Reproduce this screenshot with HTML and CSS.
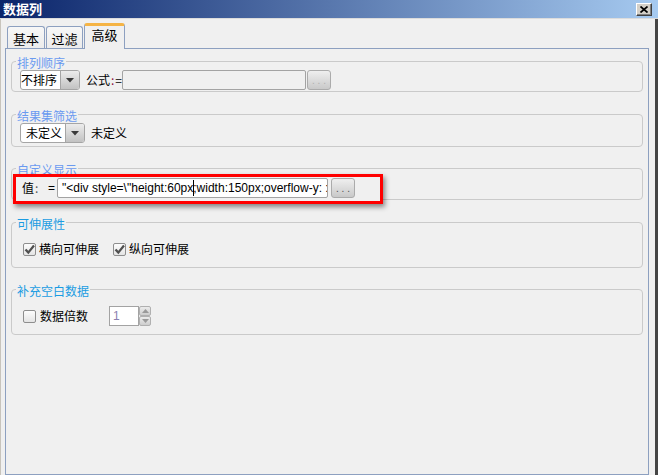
FILE: index.html
```html
<!DOCTYPE html>
<html lang="zh">
<head>
<meta charset="utf-8">
<title>数据列</title>
<link rel="stylesheet" href="styles.css">
</head>
<body>
<div class="window">
  <div class="titlebar">
    <span class="title">数据列</span>
    <span class="close"><svg width="8" height="7" viewBox="0 0 8 7"><path d="M0.5 0.5 L7.5 6.5 M7.5 0.5 L0.5 6.5" stroke="#000" stroke-width="1.7" fill="none"/></svg></span>
  </div>
  <div class="main">
    <div class="tabs">
      <div class="tab t1">基本</div>
      <div class="tab t2">过滤</div>
      <div class="tab active">高级</div>
    </div>
    <div class="panel">
      <div class="group g1">
        <div class="legend">排列顺序</div>
        <div class="row">
          <div class="select s1"><span class="val">不排序</span><span class="btn"><svg width="8" height="5" viewBox="0 0 8 5"><polygon points="0,0 8,0 4,4.5" fill="#3a3a3a"/></svg></span></div>
          <span class="formula">公式<span class="colon">:</span>=</span>
          <div class="field disabled f1"></div>
          <div class="dots off">. . .</div>
        </div>
      </div>

      <div class="group g2">
        <div class="legend">结果集筛选</div>
        <div class="row">
          <div class="select s2"><span class="val">未定义</span><span class="btn"><svg width="8" height="5" viewBox="0 0 8 5"><polygon points="0,0 8,0 4,4.5" fill="#3a3a3a"/></svg></span></div>
          <span class="plain">未定义</span>
        </div>
      </div>

      <div class="group g3">
        <div class="legend">自定义显示</div>
        <div class="redbox">
          <span class="v-label">值<span class="vcolon">:</span></span>
          <span class="eq">=</span>
          <div class="field text"><span>"&lt;div style=\"height:60px</span><span class="caret"></span><span>;width:150px;overflow-y: :</span></div>
          <div class="dots on">. . .</div>
        </div>
      </div>

      <div class="group g4">
        <div class="legend strong">可伸展性</div>
        <div class="row checks">
          <span class="cb"><svg width="11" height="11" viewBox="0 0 11 11"><path d="M1.5 5.5 L4.3 8.6 L10 1.5" stroke="#4f4f4f" stroke-width="2.3" fill="none"/></svg></span>
          <span class="cb-label">横向可伸展</span>
          <span class="cb second"><svg width="11" height="11" viewBox="0 0 11 11"><path d="M1.5 5.5 L4.3 8.6 L10 1.5" stroke="#4f4f4f" stroke-width="2.3" fill="none"/></svg></span>
          <span class="cb-label">纵向可伸展</span>
        </div>
      </div>

      <div class="group g5">
        <div class="legend strong">补充空白数据</div>
        <div class="row checks tall">
          <span class="cb"></span>
          <span class="cb-label wide">数据倍数</span>
          <div class="spinner">
            <span class="spin-field">1</span>
            <span class="spin-btns">
              <span class="spin-b"><svg width="7" height="4" viewBox="0 0 7 4"><polygon points="0,4 7,4 3.5,0" fill="#9a9a9a"/></svg></span>
              <span class="spin-b"><svg width="7" height="4" viewBox="0 0 7 4"><polygon points="0,0 7,0 3.5,4" fill="#9a9a9a"/></svg></span>
            </span>
          </div>
        </div>
      </div>
    </div>
  </div>
</div>
</body>
</html>
```
FILE: styles.css
```css
* { box-sizing: border-box; }
html, body { margin: 0; padding: 0; }
body {
  width: 658px;
  height: 475px;
  overflow: hidden;
  background: #f0f0f0;
  font-family: "Liberation Sans", "Noto Sans CJK SC", sans-serif;
  font-size: 12px;
  color: #000;
}
.window {
  width: 658px;
  height: 475px;
  display: flex;
  flex-direction: column;
}
.titlebar {
  flex: none;
  height: 19px;
  border-bottom: 1px solid #dcdcdc;
  background: linear-gradient(to right, #0a246a, #a6caf0);
  display: flex;
  align-items: center;
  justify-content: space-between;
  padding: 0 6px 0 3px;
}
.title {
  color: #fff;
  font-family: "Noto Sans CJK SC", sans-serif;
  font-weight: bold;
  font-size: 13px;
  line-height: 16px;
}
.close {
  width: 16px;
  height: 13px;
  margin-top: 1px;
  background: #d4d0c8;
  border: 1px solid;
  border-color: #fff #404040 #404040 #fff;
  box-shadow: inset -1px -1px #808080;
  display: flex;
  align-items: center;
  justify-content: center;
}
.main {
  flex: 1;
  min-height: 0;
  display: flex;
  flex-direction: column;
  border-left: 1px solid #c8c4bc;
  border-right: 3px solid #454545;
  padding: 4px 6px 0 4px;
}
.tabs {
  flex: none;
  height: 25px;
  display: flex;
  align-items: flex-end;
  gap: 1px;
  margin-left: 2px;
  position: relative;
  z-index: 1;
}
.tab {
  height: 22px;
  border: 1px solid #8da0c0;
  border-bottom: none;
  border-radius: 3px 3px 0 0;
  background: linear-gradient(#f7f7f7, #ececec);
  text-align: center;
  font-size: 13px;
  line-height: 15px;
  padding-top: 4px;
  font-family: "Noto Sans CJK SC", sans-serif;
}
.t1 { width: 38px; }
.t2 { width: 37px; }
.tab.active {
  width: 41px;
  height: 26px;
  margin-bottom: -1px;
  background: #f0f0f0;
  border-top: 3px solid #f5b445;
  padding-top: 1px;
}
.panel {
  flex: 1;
  min-height: 0;
  border: 1px solid #8da0c0;
  padding: 0 5px;
}
.group {
  border: 1px solid #cacaca;
  border-radius: 4px;
  margin-top: 21px;
}
.g1 { margin-top: 12px; padding-bottom: 1px; }
.g2 { margin-top: 22px; padding-bottom: 3px; }
.g3 { margin-top: 21px; }
.g4 { margin-top: 22px; padding-bottom: 9px; }
.g5 { margin-top: 21px; padding-bottom: 8px; }
.legend {
  display: block;
  width: max-content;
  margin: -6px 0 0 4px;
  padding: 0 1px;
  background: #f0f0f0;
  line-height: 14px;
  color: #6a9af0;
  font-family: "Noto Sans CJK SC", sans-serif;
}
.legend.strong { color: #1a9ce2; }
.row {
  display: flex;
  align-items: center;
  height: 20px;
  padding-left: 8px;
  line-height: 14px;
}
.select {
  display: flex;
  height: 20px;
  border: 1px solid #a5a5a5;
  border-radius: 3px;
  overflow: hidden;
  background: #fff;
}
.select .val {
  line-height: 18px;
  white-space: nowrap;
  font-family: "Noto Sans CJK SC", sans-serif;
}
.s1 .val { width: 39px; }
.s2 .val { width: 44px; padding-left: 5px; }
.select .btn {
  width: 19px;
  border-left: 1px solid #a5a5a5;
  background: linear-gradient(#ececec, #c2c2c2);
  display: flex;
  align-items: center;
  justify-content: center;
}
.formula {
  width: 36px;
  margin-left: 6px;
  white-space: nowrap;
  font-family: "Noto Sans CJK SC", sans-serif;
}
.colon { color: #8a1040; padding: 0 1px; }
.field {
  height: 20px;
  border: 1px solid #a3a3a3;
  border-radius: 2px;
}
.field.disabled { background: #f0f0f0; }
.f1 { width: 184px; }
.dots {
  width: 24px;
  height: 20px;
  margin-left: 1px;
  border: 1px solid #ababab;
  border-radius: 3px;
  background: linear-gradient(#efefef, #c9c9c9);
  text-align: center;
  font-size: 10px;
  line-height: 20px;
  letter-spacing: 0;
}
.dots.off { color: #b0b0b0; }
.dots.on { color: #505050; margin-left: 3px; }
.plain {
  margin-left: 6px;
  font-family: "Noto Sans CJK SC", sans-serif;
}
.redbox {
  position: relative;
  z-index: 1;
  width: 370px;
  height: 30px;
  margin: -3px 0 -5px 1px;
  border: 3px solid #ff0000;
  background: #f0f0f0;
  box-shadow: 2px 3px 5px rgba(0, 0, 0, 0.45);
  display: flex;
  align-items: flex-start;
  padding: 1px 0 0 6px;
}
.v-label {
  width: 26px;
  line-height: 20px;
  font-family: "Noto Sans CJK SC", sans-serif;
}
.vcolon { color: #555; padding-left: 1px; }
.eq { width: 9px; line-height: 20px; }
.field.text {
  width: 271px;
  background: #fff;
  padding-left: 4px;
  line-height: 18px;
  white-space: nowrap;
  overflow: hidden;
}
.caret {
  display: inline-block;
  width: 1px;
  height: 16px;
  margin-right: -1px;
  background: #000;
  vertical-align: -4px;
}
.row.checks {
  height: 18px;
  padding-left: 11px;
  margin-top: 9px;
}
.row.checks.tall {
  height: 20px;
  margin-top: 8px;
}
.cb {
  width: 13px;
  height: 13px;
  flex: none;
  border: 1px solid #8e8e8e;
  border-radius: 2px;
  background: linear-gradient(#fdfdfd, #e4e4e4);
  display: flex;
  align-items: center;
  justify-content: center;
}
.cb.second { margin-left: 14px; }
.cb-label {
  margin-left: 3px;
  font-family: "Noto Sans CJK SC", sans-serif;
}
.cb-label.wide { margin-left: 4px; }
.spinner {
  display: flex;
  height: 20px;
  margin-left: 21px;
}
.spin-field {
  width: 30px;
  border: 1px solid #a3a3a3;
  background: #fff;
  color: #8a80b0;
  padding-left: 3px;
  line-height: 18px;
}
.spin-btns {
  width: 12px;
  display: flex;
  flex-direction: column;
}
.spin-b {
  height: 10px;
  border: 1px solid #b0b0b0;
  border-radius: 2px;
  background: linear-gradient(#ececec, #cdcdcd);
  display: flex;
  align-items: center;
  justify-content: center;
}
```
